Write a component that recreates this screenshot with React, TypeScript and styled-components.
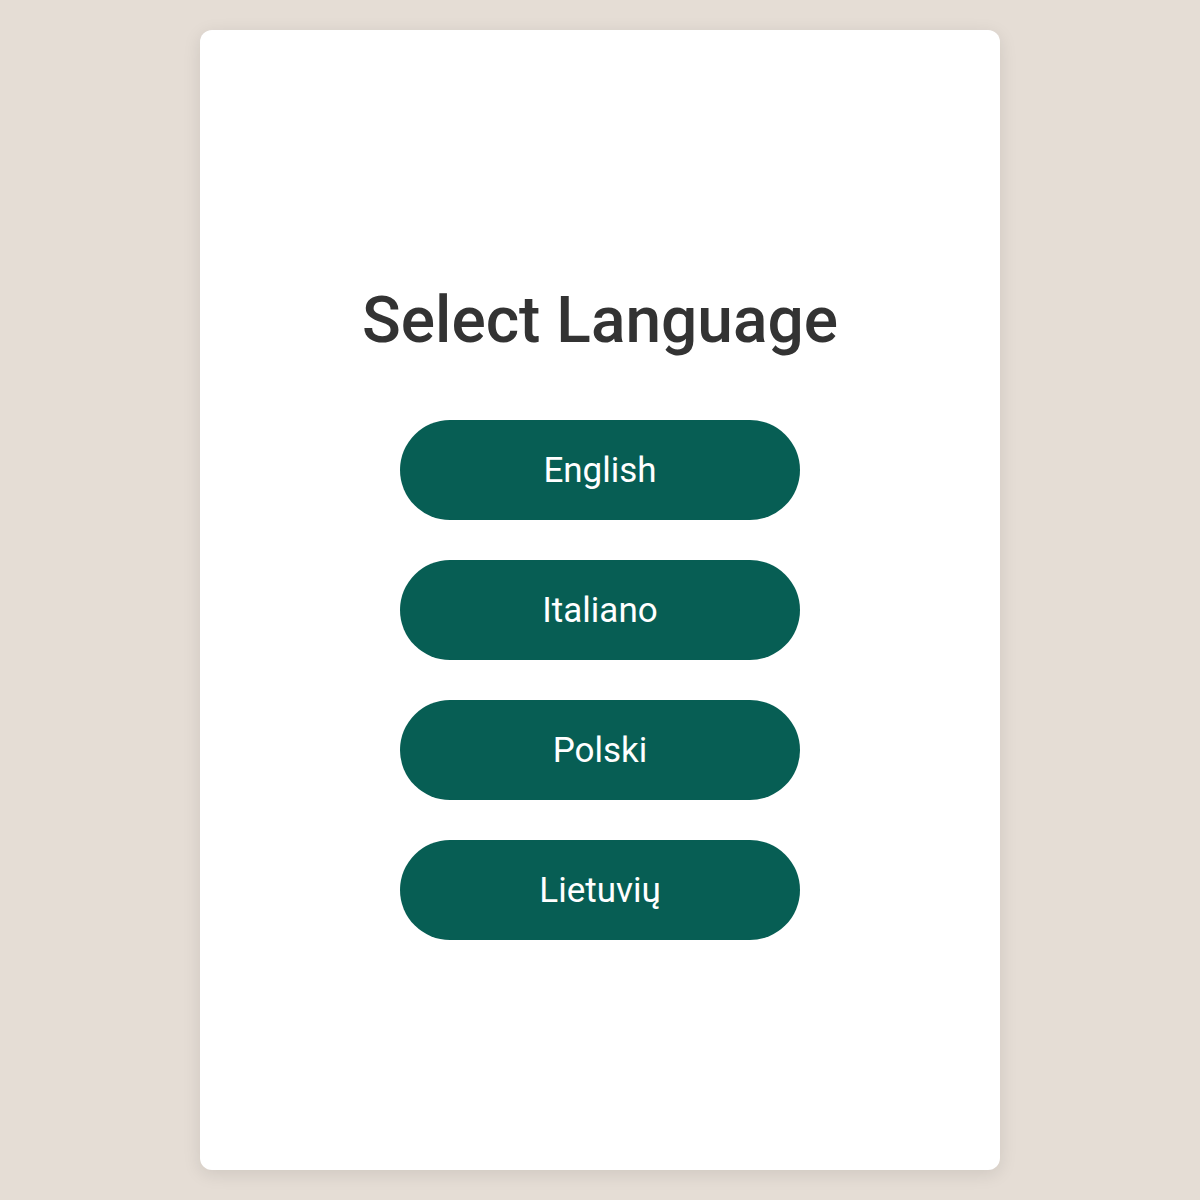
import React from "react";
import styled, { createGlobalStyle } from "styled-components";

const languages = ["English", "Italiano", "Polski", "Lietuvių"];

const GlobalStyle = createGlobalStyle`
  html, body {
    margin: 0;
    padding: 0;
    background: #e5ddd5;
    font-family: Roboto, "Noto Sans", sans-serif;
  }
`;

const Page = styled.div`
  display: flex;
  justify-content: center;
  padding: 30px 0;
  min-height: 1200px;
  box-sizing: border-box;
`;

const Card = styled.div`
  width: 800px;
  height: 1140px;
  background: #ffffff;
  border-radius: 12px;
  box-shadow: 0 4px 18px rgba(0, 0, 0, 0.1);
  display: flex;
  flex-direction: column;
  align-items: center;
  justify-content: center;
`;

const Title = styled.h1`
  margin: 23px 0 61px;
  font-size: 64px;
  line-height: 1.2;
  font-weight: 500;
  color: #333333;
`;

const ButtonList = styled.div`
  display: flex;
  flex-direction: column;
  gap: 40px;
`;

const LangButton = styled.button`
  width: 400px;
  height: 100px;
  border: none;
  border-radius: 50px;
  background: #075e54;
  color: #ffffff;
  font-family: Roboto, "Noto Sans", sans-serif;
  font-size: 35px;
  font-weight: 400;
  cursor: pointer;
  padding: 0;
`;

const App: React.FC = () => {
  return (
    <>
      <GlobalStyle />
      <Page>
        <Card>
          <Title>Select Language</Title>
          <ButtonList>
            {languages.map((lang) => (
              <LangButton key={lang}>{lang}</LangButton>
            ))}
          </ButtonList>
        </Card>
      </Page>
    </>
  );
};

export default App;
